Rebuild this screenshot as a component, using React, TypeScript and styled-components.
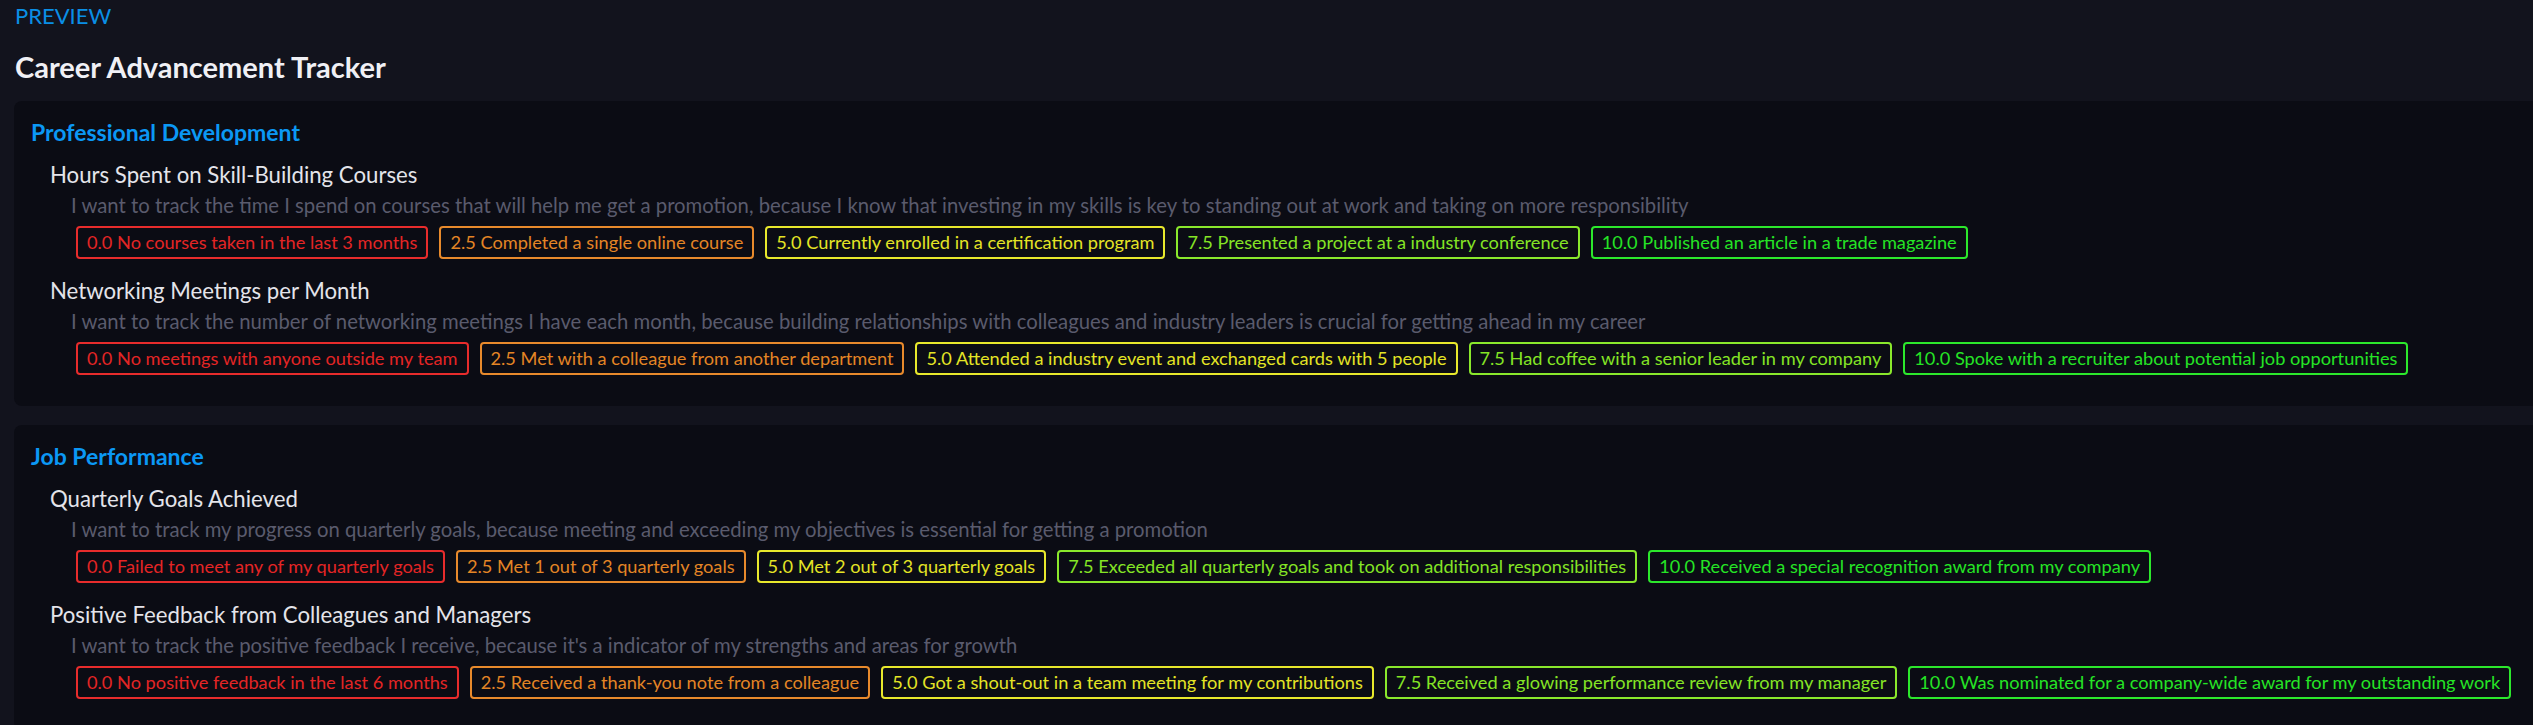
import styled, { createGlobalStyle } from "styled-components";

const GlobalStyle = createGlobalStyle`
  html, body {
    margin: 0;
    padding: 0;
    background: #12131d;
    overflow: hidden;
  }

  body {
    font-family: "Segoe UI", Lato, "Noto Sans", sans-serif;
  }
`;

type Level = {
  score: number;
  text: string;
};

type Metric = {
  title: string;
  reason: string;
  levels: Level[];
};

type Section = {
  name: string;
  metrics: Metric[];
};

const sections: Section[] = [
  {
    name: "Professional Development",
    metrics: [
      {
        title: "Hours Spent on Skill-Building Courses",
        reason:
          "I want to track the time I spend on courses that will help me get a promotion, because I know that investing in my skills is key to standing out at work and taking on more responsibility",
        levels: [
          { score: 0, text: "No courses taken in the last 3 months" },
          { score: 2.5, text: "Completed a single online course" },
          { score: 5, text: "Currently enrolled in a certification program" },
          { score: 7.5, text: "Presented a project at a industry conference" },
          { score: 10, text: "Published an article in a trade magazine" },
        ],
      },
      {
        title: "Networking Meetings per Month",
        reason:
          "I want to track the number of networking meetings I have each month, because building relationships with colleagues and industry leaders is crucial for getting ahead in my career",
        levels: [
          { score: 0, text: "No meetings with anyone outside my team" },
          { score: 2.5, text: "Met with a colleague from another department" },
          { score: 5, text: "Attended a industry event and exchanged cards with 5 people" },
          { score: 7.5, text: "Had coffee with a senior leader in my company" },
          { score: 10, text: "Spoke with a recruiter about potential job opportunities" },
        ],
      },
    ],
  },
  {
    name: "Job Performance",
    metrics: [
      {
        title: "Quarterly Goals Achieved",
        reason:
          "I want to track my progress on quarterly goals, because meeting and exceeding my objectives is essential for getting a promotion",
        levels: [
          { score: 0, text: "Failed to meet any of my quarterly goals" },
          { score: 2.5, text: "Met 1 out of 3 quarterly goals" },
          { score: 5, text: "Met 2 out of 3 quarterly goals" },
          { score: 7.5, text: "Exceeded all quarterly goals and took on additional responsibilities" },
          { score: 10, text: "Received a special recognition award from my company" },
        ],
      },
      {
        title: "Positive Feedback from Colleagues and Managers",
        reason:
          "I want to track the positive feedback I receive, because it's a indicator of my strengths and areas for growth",
        levels: [
          { score: 0, text: "No positive feedback in the last 6 months" },
          { score: 2.5, text: "Received a thank-you note from a colleague" },
          { score: 5, text: "Got a shout-out in a team meeting for my contributions" },
          { score: 7.5, text: "Received a glowing performance review from my manager" },
          { score: 10, text: "Was nominated for a company-wide award for my outstanding work" },
        ],
      },
    ],
  },
];

const App = () => {
  return (
    <>
      <GlobalStyle />
      <Page>
        <Label>PREVIEW</Label>
        <Title>Career Advancement Tracker</Title>
        {sections.map((section) => (
          <Card key={section.name}>
            <SectionName>{section.name}</SectionName>
            {section.metrics.map((metric) => (
              <MetricBlock key={metric.title}>
                <MetricTitle>{metric.title}</MetricTitle>
                <Reason>{metric.reason}</Reason>
                <Levels>
                  {metric.levels.map((level) => (
                    <Chip key={level.score} $hue={level.score * 12}>
                      {level.score.toFixed(1)} {level.text}
                    </Chip>
                  ))}
                </Levels>
              </MetricBlock>
            ))}
          </Card>
        ))}
      </Page>
    </>
  );
};

export default App;

const Page = styled.div`
  width: 2560px;
  padding: 0 0 0 14px;
  display: flex;
  flex-direction: column;
`;

const Label = styled.div`
  font-size: 22px;
  line-height: 32px;
  color: #0a8fe6;
  padding-left: 1px;
`;

const Title = styled.h1`
  margin: 17px 0 16px;
  font-size: 29px;
  line-height: 36px;
  font-weight: 700;
  color: #f0f0f5;
  padding-left: 1px;
`;

const Card = styled.section`
  background: #0b0c14;
  border-radius: 8px;
  padding: 16px 0 14px 17px;
  margin-bottom: 19px;
`;

const SectionName = styled.h2`
  margin: 0 0 13px;
  font-size: 23px;
  line-height: 30px;
  font-weight: 700;
  color: #0b98f5;
`;

const MetricBlock = styled.div`
  padding-left: 19px;
  margin-bottom: 17px;
`;

const MetricTitle = styled.div`
  font-size: 22.2px;
  line-height: 30px;
  color: #e4e4ea;
`;

const Reason = styled.div`
  margin: 2px 0 8px 21px;
  font-size: 20.3px;
  line-height: 26px;
  color: #5a5b6d;
  white-space: nowrap;
`;

const Levels = styled.div`
  display: flex;
  flex-wrap: nowrap;
  gap: 11px;
  padding-left: 26px;
`;

const Chip = styled.span<{ $hue: number }>`
  flex: none;
  border: 2px solid hsl(${(p) => p.$hue}, 80%, 54%);
  color: hsl(${(p) => p.$hue}, 78%, 52%);
  border-radius: 4px;
  padding: 2px 9px;
  font-size: 18.2px;
  line-height: 25px;
  white-space: nowrap;
`;
